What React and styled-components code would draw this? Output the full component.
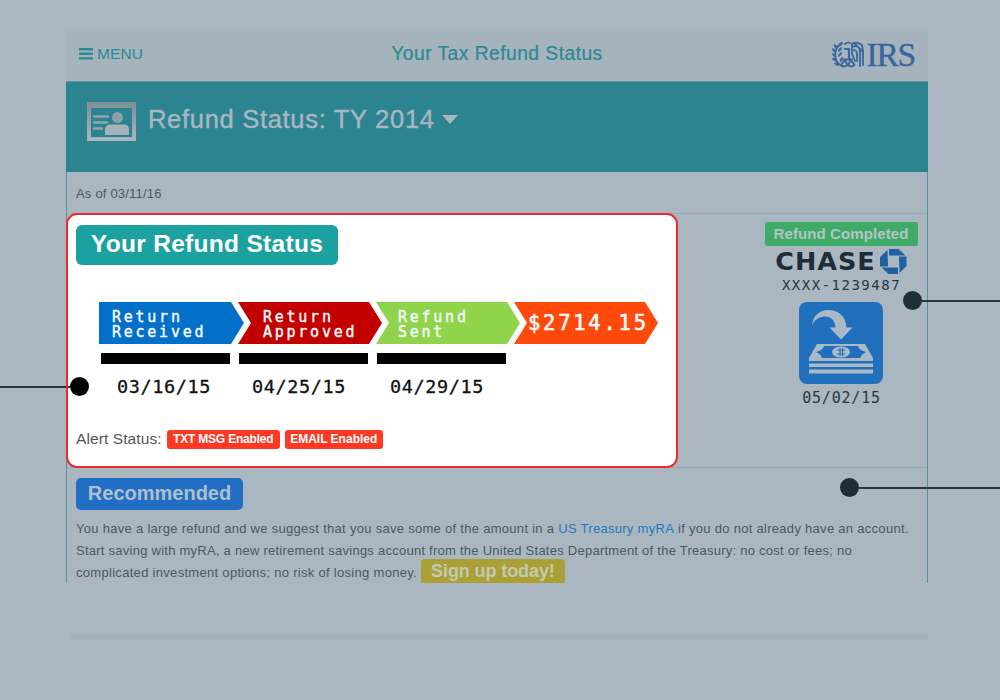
import React from 'react';
import styled, { createGlobalStyle } from 'styled-components';

const GlobalStyle = createGlobalStyle`
  * { box-sizing: border-box; }
  body { margin: 0; background: #aab7c1; font-family: "Liberation Sans", Arial, sans-serif; }
`;

const Page = styled.div`
  position: relative;
  width: 1000px;
  height: 700px;
  overflow: hidden;
  padding: 29px 72px 0 66px;
  background: #aab7c1;
`;

const Card = styled.main`
  height: 554px;
  overflow: hidden;
  display: flex;
  flex-direction: column;
`;

const TopBar = styled.header`
  flex: none;
  height: 53px;
  display: grid;
  grid-template-columns: 1fr auto 1fr;
  align-items: center;
  padding: 0 13px 3px;
  background: #a5b3bd;
  border-bottom: 1px solid #67959f;
  color: #2b8993;
`;

const Menu = styled.div`
  display: flex;
  align-items: center;
  gap: 4px;
  font-size: 15.5px;
  line-height: 20px;
  letter-spacing: 0.1px;
`;

const TopTitle = styled.div`
  font-size: 19.3px;
  line-height: 24px;
  letter-spacing: 0.45px;
  -webkit-text-stroke: 0.2px #2b8993;
`;

const Irs = styled.div`
  display: flex;
  align-items: center;
  justify-content: flex-end;
  gap: 2px;
  padding-top: 2px;
  color: #3a659d;
  font: 33.5px/34px "Liberation Serif", "Times New Roman", serif;
  letter-spacing: -1.2px;
  -webkit-text-stroke: 0.4px #3a659d;
`;

const Banner = styled.section`
  flex: none;
  height: 90px;
  display: flex;
  align-items: flex-start;
  padding: 20px 21px;
  background: #2b8490;
  color: #aab7c1;
`;

const BannerTitle = styled.h1`
  margin: 2px 7px 0 12px;
  font-size: 25.5px;
  line-height: 30px;
  font-weight: 400;
  letter-spacing: 0.7px;
  -webkit-text-stroke: 0.4px #aab7c1;
`;

const Caret = styled.span`
  margin-top: 13px;
  border: 8px solid transparent;
  border-top: 9px solid #aab7c1;
  border-bottom: 0;
`;

const Body = styled.div`
  flex: 1;
  border: solid #4e979f;
  border-width: 0 1px;
`;

const AsOf = styled.div`
  height: 41px;
  padding: 14px 9px 0;
  font-size: 13px;
  line-height: 16px;
  letter-spacing: 0.2px;
  color: #4b5962;
`;

const StatusRow = styled.section`
  height: 255px;
  display: flex;
  justify-content: space-between;
  border: solid #9aa9b3;
  border-width: 1px 0;
`;

const Highlight = styled.div`
  width: 612px;
  height: 255px;
  margin: -1px 0 0 -1px;
  padding: 10px 8px;
  background: #fff;
  border: 2px solid #ee2a2c;
  border-radius: 11px;
  flex: none;
`;

const Label = styled.span`
  display: inline-block;
  color: ${p => p.$fg || '#fff'};
  background: ${p => p.$bg};
  font-weight: 700;
  font-size: ${p => p.$size}px;
  line-height: ${p => p.$line}px;
  height: ${p => p.$h}px;
  width: ${p => p.$w}px;
  text-align: center;
  letter-spacing: ${p => p.$ls || 0}px;
  border-radius: ${p => p.$r}px;
  white-space: nowrap;
`;

const mono = '"DejaVu Sans Mono", "Liberation Mono", monospace';

const Steps = styled.div`
  display: flex;
  margin: 37px 0 0 23px;
`;

const notch = 'polygon(0 0, 131px 0, 100% 50%, 131px 100%, 0 100%, 13px 50%)';
const flat = 'polygon(0 0, 132px 0, 100% 50%, 132px 100%, 0 100%)';

const Step = styled.div`
  flex: none;
  width: ${p => (p.$first ? 145 : 144)}px;
  height: 42px;
  margin-left: ${p => (p.$first ? 0 : -6)}px;
  padding: 8px 0 0 ${p => p.$pad}px;
  background: ${p => p.$bg};
  clip-path: ${p => (p.$first ? flat : notch)};
  color: #f6fafc;
  font: ${p => (p.$amount ? '20.5px/27px' : '15px/15px')} ${mono};
  letter-spacing: ${p => (p.$amount ? 2.75 : 2.75)}px;
  -webkit-text-stroke: ${p => (p.$amount ? 0.6 : 0.4)}px #f6fafc;
  white-space: pre-line;
`;

const Dates = styled.div`
  display: grid;
  grid-template-columns: repeat(3, 138px);
  margin: 9px 0 0 25px;
`;

const DateCell = styled.div`
  width: 129px;
  border-top: 11px solid #000;
  padding: 13px 0 0 ${p => p.$pad}px;
  font: 18.5px/20px ${mono};
  letter-spacing: 0.6px;
  -webkit-text-stroke: 0.3px #111;
  color: #111;
`;

const Alerts = styled.div`
  display: flex;
  align-items: center;
  gap: 5px;
  margin-top: 33px;
  font-size: 15.5px;
  line-height: 18px;
  letter-spacing: 0.1px;
  color: #555;
`;

const AlertText = styled.span`
  margin-top: -2px;
`;

const Bank = styled.aside`
  width: 154px;
  margin-right: 9px;
  padding-top: 8px;
  display: flex;
  flex-direction: column;
  align-items: center;
  color: #202c38;
`;

const BankLogo = styled.div`
  display: flex;
  align-items: center;
  gap: 4px;
  height: 25px;
  margin-top: 3px;
  font: 700 25.5px/25px "DejaVu Sans", sans-serif;
  letter-spacing: 1px;
`;

const Mono = styled.div`
  font: ${p => p.$size}px/17px ${mono};
  letter-spacing: ${p => p.$ls}px;
  color: #2a3640;
  white-space: nowrap;
  padding: 3px 0 0 1px;
`;

const Advice = styled.section`
  padding: 10px 9px 0;
`;

const AdviceText = styled.p`
  margin: 8px 0 0;
  font-size: 13px;
  line-height: 22px;
  color: #4b5962;
  white-space: nowrap;
`;

const TextLine = styled.span`
  display: flex;
  height: 22px;
  white-space: pre;
  letter-spacing: ${p => p.$ls}px;
`;

const SignUp = styled(Label)`
  margin-top: -3px;
`;

const Link = styled.a`
  color: #2878bd;
`;

const Footer = styled.div`
  height: 6px;
  margin: 51px 0 0 5px;
  background: #a5b2bc;
`;

const Callout = styled.div`
  position: absolute;
  z-index: 2;
  left: ${p => p.$x}px;
  top: ${p => p.$y}px;
  width: ${p => p.$w}px;
  height: 19px;
  display: flex;
  align-items: center;
  color: ${p => p.$color};
`;

const Dot = styled.span`
  flex: none;
  width: 19px;
  height: 19px;
  border-radius: 50%;
  background: currentColor;
`;

const Line = styled.span`
  flex: ${p => (p.$w ? 'none' : 1)};
  width: ${p => p.$w || 0}px;
  height: 2px;
  margin-right: ${p => p.$gap || 0}px;
  background: #27343f;
`;

const Bars = () => (
  <svg width="14" height="12" viewBox="0 0 14 12" fill="currentColor">
    <rect y="0" width="14" height="2.400" rx=".5" />
    <rect y="4.600" width="14" height="2.400" rx=".5" />
    <rect y="9.200" width="14" height="2.400" rx=".5" />
  </svg>
);

const Eagle = () => (
  <svg width="32" height="28" viewBox="0 0 32 28" fill="none" stroke="currentColor" strokeWidth="1.8" strokeLinecap="round" strokeLinejoin="round">
    <path d="M10 25C3 22 1 13 6 5" />
    <g fill="currentColor" stroke="none">
      <path d="M6 6Q6 1 11 1Q11 5 6 6ZM5 8Q1 6 2 3Q6 4 5 8ZM4 12Q0 11 0 7Q4 8 4 12ZM4 16Q0 16 0 12Q4 13 4 16ZM5 20Q1 21 0 17Q4 16 5 20ZM8 24Q4 26 2 22Q6 20 8 24ZM6 11Q6 7 10 6Q10 10 6 11ZM6 16Q6 12 10 11Q10 15 6 16ZM8 21Q7 17 11 16Q12 19 8 21Z" />
    </g>
    <path d="M13 3Q15 1 18 2" />
    <path d="M13 8H17V18" strokeWidth="2.200" />
    <path d="M12 18.500H20M12.500 19L9 24Q11 27 15.500 24ZM19 19L16 24Q19 27 22.500 24Z" />
    <path d="M20 3Q25 0 30 4L31 10V24M20 6Q27 3 28 10V25M20 9.500Q25 8 25 13V20M20 3V13L23 20M23 3L30 10" strokeWidth="1.800" />
  </svg>
);

const IdCard = () => (
  <svg width="49" height="39" viewBox="0 0 49 39">
    <defs>
      <linearGradient id="metal" x1="0" y1="0" x2="0" y2="1">
        <stop offset="0" stopColor="#7d8f99" />
        <stop offset="1" stopColor="#aab7c1" />
      </linearGradient>
    </defs>
    <path fill="url(#metal)" fillRule="evenodd" d="M0 0H49V39H0ZM4 6V35H45V6Z" />
    <circle cx="30.5" cy="15.5" r="5.5" fill="#8f9fa9" />
    <path d="M18 33V28Q18 22.500 24 22.500H37Q42 22.500 42 28V33Z" fill="#a5b3bd" />
    <path d="M7 14.500H21M7 20.500H20M7 26.500H15" stroke="#93a5af" strokeWidth="2.500" strokeLinecap="round" />
  </svg>
);

const Octagon = () => (
  <svg width="27" height="25" viewBox="0 0 27 25" fill="#2160a2">
    <path d="M9 0H18.500L25.500 6.500H9Z" />
    <path d="M19 7.500H26.500V17L19.500 24Z" />
    <path d="M18 18.500V25H8.500L1.500 18.500Z" />
    <path d="M8 17.500H0V8L7.500 1Z" />
  </svg>
);

const DepositTile = styled.svg`
  margin: 8px 0 3px;
  flex: none;
`;

const Deposit = () => (
  <DepositTile width="84" height="82" viewBox="0 0 84 82">
    <rect width="84" height="82" rx="8" fill="#2070bd" />
    <g fill="#aab9c6">
      <path d="M13 24C14 13 21 8 29 8C40 8 47 15 47.500 25.500H53.500L42 37.500L30.500 25.500H36.500C36 18 32 14.500 26 14.500C20 14.500 15 18 13 24Z" />
      <path d="M18 42H66L74 56V59H10V56Z" />
      <rect x="10" y="61.500" width="64" height="3.500" />
      <rect x="10" y="67.500" width="64" height="4" />
    </g>
    <path d="M25 44H59Q60 48 67 50Q63 52 61 56H23Q22 52 17 50Q24 48 25 44Z" fill="#2070bd" />
    <ellipse cx="42" cy="50" rx="9" ry="5.500" fill="#aab9c6" />
    <path d="M38 48H46M38 52H46M41 46V54M43.500 46V54" stroke="#2070bd" strokeWidth="1.100" />
  </DepositTile>
);

export default function App() {
  return (
    <Page>
      <GlobalStyle />
      <Card>
        <TopBar>
          <Menu><Bars />MENU</Menu>
          <TopTitle>Your Tax Refund Status</TopTitle>
          <Irs><Eagle />IRS</Irs>
        </TopBar>
        <Banner>
          <IdCard />
          <BannerTitle>Refund Status: TY 2014</BannerTitle>
          <Caret />
        </Banner>
        <Body>
          <AsOf>As of 03/11/16</AsOf>
          <StatusRow>
            <Highlight>
              <Label $bg="#1ba2a0" $size={24.5} $line={37} $h={40} $w={262} $r={6} $ls={0.3}>Your Refund Status</Label>
              <Steps>
                <Step $first $bg="#0270c8" $pad={13}>{'Return\nReceived'}</Step>
                <Step $bg="#c30000" $pad={25}>{'Return\nApproved'}</Step>
                <Step $bg="#90d44b" $pad={22}>{'Refund\nSent'}</Step>
                <Step $amount $bg="#ff4a0c" $pad={14}>$2714.15</Step>
              </Steps>
              <Dates>
                <DateCell $pad={16}>03/16/15</DateCell>
                <DateCell $pad={13}>04/25/15</DateCell>
                <DateCell $pad={13}>04/29/15</DateCell>
              </Dates>
              <Alerts>
                <AlertText>Alert Status:</AlertText>
                <Label $bg="#ff3824" $size={12} $line={19} $h={19} $w={113} $r={3} $ls={-0.2}>TXT MSG Enabled</Label>
                <Label $bg="#ff3824" $size={12} $line={19} $h={19} $w={98} $r={3}>EMAIL Enabled</Label>
              </Alerts>
            </Highlight>
            <Bank>
              <Label $fg="#b2c4c8" $bg="#40ab66" $size={15} $line={23} $h={24} $w={153} $r={3} $ls={0.1}>Refund Completed</Label>
              <BankLogo>CHASE<Octagon /></BankLogo>
              <Mono $size={14} $ls={1.5}>XXXX-1239487</Mono>
              <Deposit />
              <Mono $size={15} $ls={0.8}>05/02/15</Mono>
            </Bank>
          </StatusRow>
          <Advice>
            <Label $fg="#aebfce" $bg="#216ec3" $size={20} $line={31} $h={32} $w={167} $r={5}>Recommended</Label>
            <AdviceText>
              <TextLine $ls={0.29}>You have a large refund and we suggest that you save some of the amount in a <Link>US Treasury myRA</Link> if you do not already have an account.</TextLine>
              <TextLine $ls={0.25}>Start saving with myRA, a new retirement savings account from the United States Department of the Treasury: no cost or fees; no</TextLine>
              <TextLine $ls={0.3}>complicated investment options; no risk of losing money. <SignUp $fg="#c3c9b4" $bg="#aaa035" $size={18} $line={25} $h={28} $w={144} $r={4} $ls={-0.1}>Sign up today!</SignUp></TextLine>
            </AdviceText>
          </Advice>
        </Body>
      </Card>
      <Footer />
      <Callout $x={0} $y={377} $w={90} $color="#000"><Line $w={66} $gap={2} /><Line $w={2} /><Dot /></Callout>
      <Callout $x={903} $y={291} $w={97} $color="#1f2d37"><Dot /><Line /></Callout>
      <Callout $x={840} $y={478} $w={160} $color="#1f2d37"><Dot /><Line /></Callout>
    </Page>
  );
}
